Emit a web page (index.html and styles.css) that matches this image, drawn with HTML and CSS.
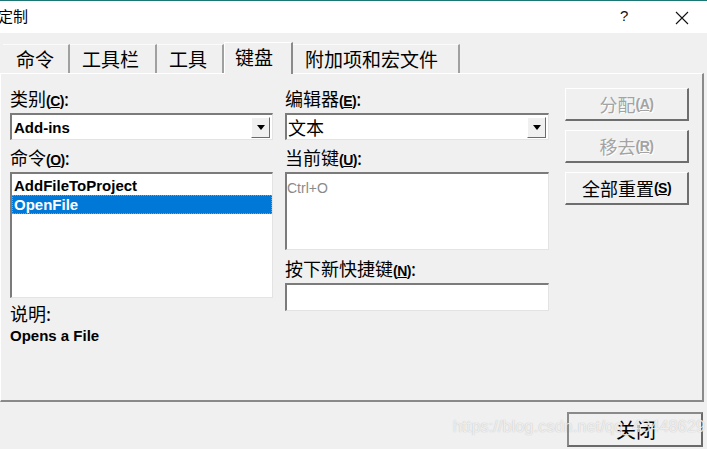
FILE: index.html
```html
<!DOCTYPE html>
<html>
<head>
<meta charset="utf-8">
<link rel="stylesheet" href="styles.css">
</head>
<body>
<div class="window">
  <div class="titlebar">
    <span class="title">定制</span>
    <span class="tb-help">?</span>
    <span class="tb-close">
      <svg width="14" height="14" viewBox="0 0 14 14"><path d="M1 1 L13 13 M13 1 L1 13" stroke="#111" stroke-width="1.1" fill="none"/></svg>
    </span>
  </div>
  <div class="tabs">
    <div class="tab t1">命令</div>
    <div class="tab t2">工具栏</div>
    <div class="tab t3">工具</div>
    <div class="tab active">键盘</div>
    <div class="tab t5">附加项和宏文件</div>
  </div>
  <div class="panel">
    <div class="col left">
      <div class="label">类别<span class="acc">(<u>C</u>)</span>:</div>
      <div class="combo">
        <span class="combo-text latin">Add-ins</span>
        <span class="drop"><svg width="8" height="5" viewBox="0 0 8 5"><path d="M0 0 H8 L4 5 Z" fill="#000"/></svg></span>
      </div>
      <div class="label gap">命令<span class="acc">(<u>O</u>)</span>:</div>
      <div class="listbox">
        <div class="item">AddFileToProject</div>
        <div class="item sel">OpenFile</div>
      </div>
      <div class="label desc">说明:</div>
      <div class="desc-text">Opens a File</div>
    </div>
    <div class="col mid">
      <div class="label">编辑器<span class="acc">(<u>E</u>)</span>:</div>
      <div class="combo">
        <span class="combo-text cjk">文本</span>
        <span class="drop"><svg width="8" height="5" viewBox="0 0 8 5"><path d="M0 0 H8 L4 5 Z" fill="#000"/></svg></span>
      </div>
      <div class="label gap">当前键<span class="acc">(<u>U</u>)</span>:</div>
      <div class="keybox"><span class="keytext">Ctrl+O</span></div>
      <div class="label gap2">按下新快捷键<span class="acc">(<u>N</u>)</span>:</div>
      <div class="input"></div>
    </div>
    <div class="col btns">
      <div class="btn disabled">分配<span class="acc">(<u>A</u>)</span></div>
      <div class="btn disabled">移去<span class="acc">(<u>R</u>)</span></div>
      <div class="btn">全部重置<span class="acc">(<u>S</u>)</span></div>
    </div>
  </div>
  <div class="footer">
    <div class="close-btn">关闭</div>
  </div>
  <div class="watermark">https://blog.csdn.net/qq_43448629</div>
</div>
</body>
</html>
```

FILE: styles.css
```css
html, body {
  margin: 0;
  padding: 0;
}
body {
  width: 707px;
  height: 449px;
  overflow: hidden;
  background: #f0f0f0;
  font-family: "Noto Sans CJK SC", "Liberation Sans", sans-serif;
  color: #000;
}
.window {
  position: relative;
  width: 707px;
  height: 449px;
}
.titlebar {
  height: 32px;
  background: #fff;
  border-top: 1px solid #1b7774;
  display: flex;
  align-items: center;
  position: relative;
}
.title {
  font-size: 15px;
  margin-left: -2px;
  line-height: 20px;
  margin-top: -2px;
}
.tb-help {
  position: absolute;
  left: 620px;
  top: 6px;
  font-family: "Liberation Sans", sans-serif;
  font-size: 15px;
  color: #111;
}
.tb-close {
  position: absolute;
  left: 675px;
  top: 10px;
  width: 14px;
  height: 14px;
  display: flex;
}
.tabs {
  display: flex;
  height: 31px;
  margin-top: 9px;
  padding-left: 3px;
  align-items: flex-end;
}
.tab {
  height: 27px;
  font-size: 19px;
  line-height: 27px;
  padding: 0 12px;
  border-top: 1px solid #fbfbfb;
  border-right: 2px solid #a0a0a0;
  box-sizing: border-box;
  height: 29px;
}
.t1 { width: 67px; padding-left: 13px; }
.t2 { width: 87px; }
.t3 { width: 67px; }
.t5 { width: 167px; }
.active {
  width: 69px;
  height: 32px;
  border-top: 1px solid #fff;
  border-left: 1px solid #fff;
  border-right: 2px solid #8a8a8a;
  margin-bottom: -1px;
  line-height: 28px;
  padding-left: 10px;
  background: #f0f0f0;
  position: relative;
  z-index: 1;
}
.panel {
  height: 326px;
  border-top: 1px solid #fff;
  border-left: 1px solid #fff;
  border-right: 2px solid #8a8a8a;
  border-bottom: 2px solid #8a8a8a;
  width: 701px;
  box-sizing: content-box;
  display: flex;
  padding-left: 9px;
  box-sizing: border-box;
  width: 704px;
  height: 329px;
}
.col {
  display: flex;
  flex-direction: column;
}
.left {
  width: 263px;
  padding-top: 12px;
}
.mid {
  width: 264px;
  margin-left: 12px;
  padding-top: 12px;
}
.btns {
  width: 124px;
  margin-left: 16px;
  padding-top: 14px;
  gap: 9px;
}
.label {
  font-size: 18px;
  line-height: 24px;
  height: 24px;
  white-space: nowrap;
}
.acc {
  font-family: "Liberation Sans", sans-serif;
  font-weight: bold;
  font-size: 14px;
  letter-spacing: -0.5px;
}
.gap { margin-top: 5px; }
.gap2 { margin-top: 6px; }
.combo {
  margin-top: 3px;
  height: 27px;
  background: #fff;
  border-top: 2px solid #7b7b7b;
  border-left: 2px solid #7b7b7b;
  border-right: 1px solid #e3e3e3;
  border-bottom: 1px solid #e3e3e3;
  box-sizing: border-box;
  display: flex;
  align-items: center;
  justify-content: space-between;
}
.combo-text.latin {
  font-family: "Liberation Sans", sans-serif;
  font-weight: bold;
  font-size: 15px;
  margin-left: 2px;
}
.combo-text.cjk {
  font-size: 18px;
  margin-left: 1px;
  line-height: 22px;
}
.drop {
  width: 19px;
  height: 21px;
  margin-right: 2px;
  background: #f0f0f0;
  border-top: 1px solid #fff;
  border-left: 1px solid #fff;
  border-right: 1px solid #6b6b6b;
  border-bottom: 1px solid #6b6b6b;
  box-sizing: border-box;
  display: flex;
  align-items: center;
  justify-content: center;
}
.listbox {
  margin-top: 3px;
  height: 126px;
  background: #fff;
  border-top: 2px solid #7b7b7b;
  border-left: 2px solid #7b7b7b;
  border-right: 1px solid #e3e3e3;
  border-bottom: 1px solid #e3e3e3;
  box-sizing: border-box;
  padding-top: 2px;
}
.item {
  font-family: "Liberation Sans", sans-serif;
  font-weight: bold;
  font-size: 15px;
  line-height: 19px;
  height: 19px;
  padding-left: 2px;
}
.item.sel {
  background: #0078d7;
  color: #fff;
  outline: 1px dotted #e08a30;
  outline-offset: -1px;
}
.desc {
  margin-top: 3px;
}
.desc-text {
  font-family: "Liberation Sans", sans-serif;
  font-weight: bold;
  font-size: 15px;
  line-height: 20px;
  margin-top: 1px;
}
.keybox {
  margin-top: 3px;
  height: 78px;
  background: #fff;
  border-top: 2px solid #7b7b7b;
  border-left: 2px solid #7b7b7b;
  border-right: 1px solid #e3e3e3;
  border-bottom: 1px solid #e3e3e3;
  box-sizing: border-box;
}
.keytext {
  font-family: "Liberation Sans", sans-serif;
  font-size: 14px;
  color: #8a8a8a;
  line-height: 20px;
  margin-left: 0px;
}
.input {
  margin-top: 3px;
  height: 28px;
  background: #fff;
  border-top: 2px solid #7b7b7b;
  border-left: 2px solid #7b7b7b;
  border-right: 1px solid #e3e3e3;
  border-bottom: 1px solid #e3e3e3;
  box-sizing: border-box;
}
.btn {
  height: 33px;
  box-sizing: border-box;
  border-top: 1px solid #fff;
  border-left: 1px solid #fff;
  border-right: 2px solid #6e6e6e;
  border-bottom: 2px solid #6e6e6e;
  display: flex;
  align-items: center;
  justify-content: center;
  font-size: 18px;
  line-height: 24px;
}
.btn.disabled {
  color: #a3a3a3;
  text-shadow: 1px 1px 0 #fff;
}
.footer {
  display: flex;
  justify-content: flex-end;
  padding-top: 10px;
  padding-right: 4px;
}
.close-btn {
  width: 136px;
  height: 35px;
  box-sizing: border-box;
  border: 2px solid #6a6a6a;
  border-top-color: #8a8a8a;
  border-left-color: #8a8a8a;
  display: flex;
  align-items: center;
  justify-content: center;
  font-size: 20px;
  padding-left: 2px;
}
.watermark {
  position: absolute;
  left: 453px;
  top: 418px;
  font-family: "Liberation Sans", sans-serif;
  font-size: 16px;
  color: rgba(255, 255, 255, 0.75);
  text-shadow: 0 0 1px rgba(120, 120, 120, 0.5);
  white-space: nowrap;
  letter-spacing: 0.2px;
}
```
